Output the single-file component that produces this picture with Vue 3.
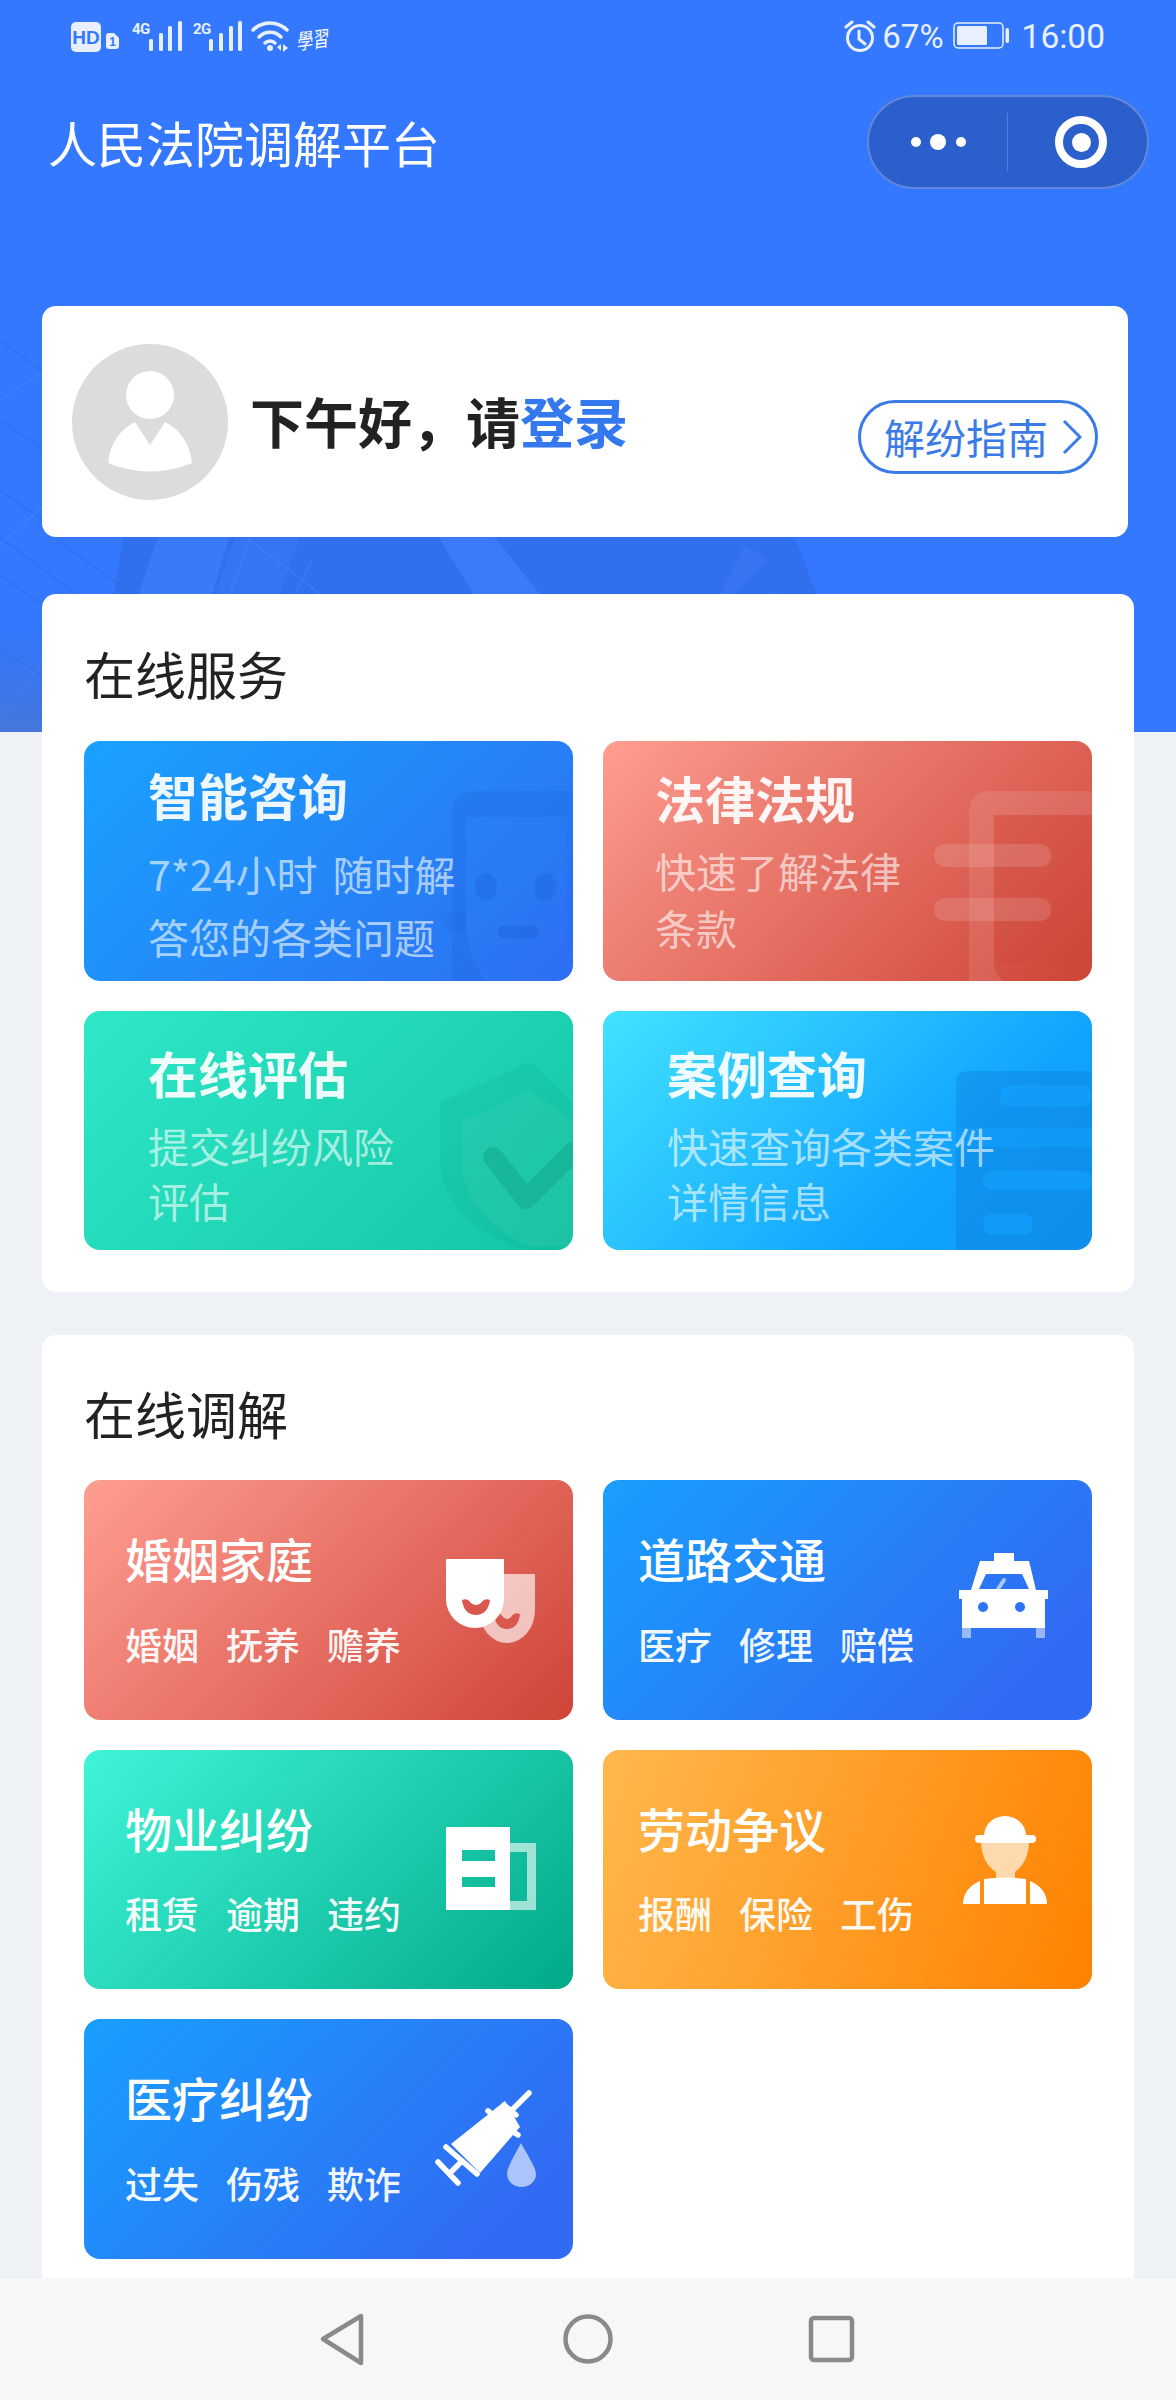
<script setup>
const services = [
  { key: 'ask', title: '智能咨询', lines: ['7*24小时 随时解', '答您的各类问题'] },
  { key: 'law', title: '法律法规', lines: ['快速了解法律', '条款'] },
  { key: 'risk', title: '在线评估', lines: ['提交纠纷风险', '评估'] },
  { key: 'case', title: '案例查询', lines: ['快速查询各类案件', '详情信息'] },
]

const disputes = [
  { key: 'family', color: 'red', title: '婚姻家庭', tags: ['婚姻', '抚养', '赡养'] },
  { key: 'traffic', color: 'blue', title: '道路交通', tags: ['医疗', '修理', '赔偿'] },
  { key: 'estate', color: 'green', title: '物业纠纷', tags: ['租赁', '逾期', '违约'] },
  { key: 'labor', color: 'orange', title: '劳动争议', tags: ['报酬', '保险', '工伤'] },
  { key: 'medical', color: 'blue', title: '医疗纠纷', tags: ['过失', '伤残', '欺诈'] },
]
</script>

<template>
  <div class="page">
    <!-- blue backdrop with the faint building -->
    <svg class="hero-bg" viewBox="0 0 1176 732" width="1176" height="732">
      <defs>
        <linearGradient id="fade" x1="0" y1="0" x2="0" y2="1">
          <stop offset="0" stop-color="#3a6fd8" stop-opacity="0" />
          <stop offset="1" stop-color="#4a78d4" stop-opacity="0.8" />
        </linearGradient>
      </defs>
      <rect width="1176" height="732" fill="#3478ff" />
      <polygon points="130,500 780,500 870,732 90,732" fill="#2c68dd" opacity="0.5" />
      <polygon points="170,500 240,500 205,620 130,620" fill="#3f80ff" opacity="0.6" />
      <polygon points="415,500 465,500 650,732 560,732" fill="#3b7bfb" />
      <polygon points="235,537 300,537 280,594 215,594" fill="#3b7bf8" opacity="0.45" />
      <polygon points="745,545 768,560 735,594 720,594" fill="#3a78f4" opacity="0.7" />
      <polygon points="775,590 790,610 770,640 760,620" fill="#3a78f4" opacity="0.7" />
      <g stroke="#2a62cf" stroke-width="1.500" opacity="0.32" fill="none">
        <line x1="0" y1="340" x2="60" y2="385" />
        <line x1="0" y1="420" x2="60" y2="460" />
        <line x1="0" y1="490" x2="60" y2="532" />
        <line x1="0" y1="537" x2="75" y2="594" />
        <line x1="0" y1="575" x2="60" y2="618" />
        <line x1="0" y1="650" x2="60" y2="685" />
        <line x1="0" y1="690" x2="60" y2="728" />
        <line x1="56" y1="540" x2="127" y2="590" />
      </g>
      <g stroke="#4c8cff" stroke-width="1.500" opacity="0.4" fill="none">
        <line x1="0" y1="545" x2="60" y2="490" />
        <line x1="0" y1="400" x2="60" y2="360" />
        <line x1="0" y1="720" x2="50" y2="650" />
        <line x1="230" y1="594" x2="250" y2="537" />
        <line x1="295" y1="594" x2="312" y2="560" />
        <line x1="250" y1="540" x2="320" y2="594" />
      </g>
      <rect x="0" y="620" width="60" height="112" fill="url(#fade)" />
    </svg>

    <!-- status bar -->
    <div class="status">
      <svg class="status-left" width="262" height="36" viewBox="71 20 262 36">
        <rect x="71" y="22" width="30" height="30" rx="5" fill="#e8f0ff" />
        <text x="86" y="44" class="hd" text-anchor="middle">HD</text>
        <path d="M106 36 a3 3 0 0 1 3-3 h5 l5 5 v8 a3 3 0 0 1-3 3 h-7 a3 3 0 0 1-3-3z" fill="#e8f0ff" />
        <text x="112.500" y="46" class="sim" text-anchor="middle">1</text>
        <text x="132" y="34" class="net">4G</text>
        <g fill="#e8f0ff">
          <rect x="149" y="39" width="4" height="12" rx="1.500" />
          <rect x="159" y="33" width="4" height="18" rx="1.500" />
          <rect x="168" y="26" width="4" height="25" rx="1.500" />
          <rect x="178" y="21" width="4" height="30" rx="1.500" />
        </g>
        <text x="193" y="34" class="net">2G</text>
        <g fill="#e8f0ff">
          <rect x="209" y="39" width="4" height="12" rx="1.500" />
          <rect x="219" y="33" width="4" height="18" rx="1.500" />
          <rect x="229" y="26" width="4" height="25" rx="1.500" />
          <rect x="238" y="21" width="4" height="30" rx="1.500" />
        </g>
        <g fill="none" stroke="#e8f0ff" stroke-width="3.500" stroke-linecap="round">
          <path d="M253 30 a24 24 0 0 1 34 0" />
          <path d="M259 37 a15 15 0 0 1 22 0" />
          <path d="M265 43 a7 7 0 0 1 10 0" />
        </g>
        <circle cx="270" cy="48" r="3" fill="#e8f0ff" />
        <path d="M277 47 l4-3 v7z M283 44 l5 4-5 4z" fill="#e8f0ff" />
        <text class="script" transform="translate(297 50) rotate(-8) scale(0.95 1.25)">學習</text>
      </svg>
      <div class="status-right">
        <svg width="32" height="34" viewBox="0 0 32 34" fill="none" stroke="#e8f0ff" stroke-width="3" stroke-linecap="round">
          <circle cx="16" cy="19" r="12.500" />
          <path d="M15 12v8l6 5" />
          <path d="M2 8 l6-5 M30 8 l-6-5" />
        </svg>
        <span class="pct">67%</span>
        <svg class="batt" width="57" height="28" viewBox="0 0 57 28" fill="none">
          <rect x="1" y="1" width="49" height="25" rx="4" stroke="#e8f0ff" stroke-width="1.500" />
          <rect x="4" y="4" width="30" height="19" rx="1.500" fill="#e8f0ff" />
          <rect x="52.500" y="6" width="3.500" height="15" rx="1.700" fill="#e8f0ff" />
        </svg>
        <span class="time">16:00</span>
      </div>
    </div>

    <!-- mini program nav -->
    <header class="nav">
      <span class="nav-title">人民法院调解平台</span>
      <div class="capsule">
        <div class="capsule-dots">
          <i class="dot small"></i><i class="dot"></i><i class="dot small"></i>
        </div>
        <div class="capsule-sep"></div>
        <div class="capsule-ring"><i></i></div>
      </div>
    </header>

    <!-- user card -->
    <section class="user">
      <svg class="avatar" width="156" height="156" viewBox="0 0 156 156">
        <circle cx="78" cy="78" r="78" fill="#dcdcdc" />
        <circle cx="78" cy="51" r="24" fill="#fff" />
        <path d="M63 78 L78 101 L93 78 C108 85 118 100 120 119 Q78 136 36 119 C38 100 48 85 63 78Z" fill="#fff" />
      </svg>
      <div class="greet">下午好，请<span>登录</span></div>
      <div class="guide">
        解纷指南
        <svg width="20" height="36" viewBox="0 0 20 36" fill="none" stroke="#3b7be8" stroke-width="3">
          <path d="M2 2 L18 18 L2 34" />
        </svg>
      </div>
    </section>

    <!-- online services -->
    <section class="panel services">
      <h2>在线服务</h2>
      <div class="grid">
        <div v-for="s in services" :key="s.key" class="tile svc" :class="s.key">
          <svg class="deco" width="489" height="240" viewBox="0 0 489 240">
            <g v-if="s.key === 'ask'">
              <path d="M368 240 V70 Q368 50 388 50 H489 V76 H382 V178 Q382 215 402 240Z" fill="#1c5fd8" opacity="0.22" />
              <path d="M355 170 h27 v20 h-20z" fill="#1c5fd8" opacity="0.14" />
              <path d="M483 76 h6 V205 h-6z" fill="#1c5fd8" opacity="0.16" />
              <ellipse cx="402" cy="146" rx="11" ry="14" fill="#1c5fd8" opacity="0.32" />
              <ellipse cx="461" cy="146" rx="11" ry="14" fill="#1c5fd8" opacity="0.32" />
              <rect x="414" y="185" width="41" height="12" rx="5" fill="#1c5fd8" opacity="0.38" />
            </g>
            <g v-else-if="s.key === 'law'">
              <path d="M391 74 H489 V222 H391Z" fill="#c8433a" opacity="0.18" />
              <path d="M366 240 V72 Q366 50 388 50 H489 V74 H391 V222 Q391 232 400 240Z" fill="#fff" opacity="0.1" />
              <rect x="331" y="103" width="117" height="23" rx="11" fill="#fff" opacity="0.13" />
              <rect x="331" y="157" width="117" height="23" rx="11" fill="#fff" opacity="0.13" />
            </g>
            <g v-else-if="s.key === 'risk'">
              <path d="M446 51 L356 92 V150 C356 195 400 228 446 240 H489 V92Z" fill="#0a9c84" opacity="0.14" />
              <path d="M446 79 L378 110 V150 C378 190 410 222 446 235 H489 V110Z" fill="#fff" opacity="0.05" />
              <path d="M409 146 L442 188 L489 141" fill="none" stroke="#0a9c84" stroke-opacity="0.38" stroke-width="20" stroke-linecap="round" stroke-linejoin="round" />
            </g>
            <g v-else>
              <path d="M353 72 Q353 60 365 60 H489 V240 H353Z" fill="#0a6fc8" opacity="0.28" />
              <rect x="397" y="74" width="92" height="22" rx="10" fill="#12a0ff" opacity="0.7" />
              <rect x="353" y="117" width="136" height="19" fill="#12a0ff" opacity="0.55" />
              <rect x="380" y="160" width="109" height="19" rx="9" fill="#12a0ff" opacity="0.7" />
              <rect x="380" y="203" width="50" height="21" rx="9" fill="#12a0ff" opacity="0.7" />
            </g>
          </svg>
          <div class="svc-title">{{ s.title }}</div>
          <div class="svc-lines">
            <div v-for="l in s.lines" :key="l">{{ l }}</div>
          </div>
        </div>
      </div>
    </section>

    <!-- online mediation -->
    <section class="panel mediation">
      <h2>在线调解</h2>
      <div class="grid">
        <div v-for="d in disputes" :key="d.key" class="tile dispute" :class="d.color">
          <div class="dispute-text">
            <div class="dispute-title">{{ d.title }}</div>
            <div class="dispute-tags">
              <span v-for="t in d.tags" :key="t">{{ t }}</span>
            </div>
          </div>
          <svg class="dispute-icon" width="100" height="100" viewBox="0 0 100 100">
            <g v-if="d.key === 'family'">
              <path d="M43 24 H99 V60 A28 33 0 0 1 43 60Z" fill="#fff" opacity="0.65" />
              <path d="M58 64 C62 62 65 64 67 67 Q71 71 75 67 C77 64 80 62 84 64 C83 74 78 79 71 79 C64 79 59 74 58 64Z" fill="#d9574c" />
              <path d="M10 9 H68 V49 A29 29 0 0 1 10 49Z" fill="#fff" />
              <path d="M26 50 C30 48 33 50 35 53 Q40 57 45 53 C47 50 50 48 54 50 C53 60 47 65 40 65 C33 65 27 60 26 50Z" fill="#d9574c" />
            </g>
            <g v-else-if="d.key === 'traffic'">
              <rect x="46" y="3" width="20" height="8" fill="#fff" />
              <rect x="14" y="76" width="9" height="12" fill="#fff" opacity="0.5" />
              <rect x="88" y="76" width="9" height="12" fill="#fff" opacity="0.5" />
              <path fill-rule="evenodd" fill="#fff" d="M32 11 H81 L88 40 H100 V49 H97 V78 H14 V49 H11 V40 H23Z M38 24 L31 39 H81 L74 24Z M35 52 a5 5 0 1 0 0.010 0Z M72 52 a5 5 0 1 0 0.010 0Z" />
              <path d="M50 39 L56 30" stroke="#fff" stroke-opacity="0.6" stroke-width="4" stroke-linecap="round" />
            </g>
            <g v-else-if="d.key === 'estate'">
              <path fill-rule="evenodd" d="M74 24 H100 V91 H74 V82 H91 V33 H74Z" fill="#fff" opacity="0.6" />
              <path fill-rule="evenodd" d="M10 8 H74 V91 H10Z M26 31 V42 H59 V31Z M26 58 V68 H59 V58Z" fill="#fff" />
            </g>
            <g v-else-if="d.key === 'labor'">
              <path d="M33 22 H81 C81 38 74 48 67 53 V62 H48 V53 C40 48 33 38 33 22Z" fill="#ffd9ae" />
              <path d="M36 17 A21 20 0 0 1 78 17Z" fill="#fff" />
              <rect x="27" y="16" width="61" height="8" rx="4" fill="#fff" />
              <path d="M36 85 V60 Q57 57 78 60 V85Z" fill="#fff" />
              <path d="M15 85 C15 74 22 66 32 62 V85Z" fill="#fff" />
              <path d="M99 85 C99 74 92 66 82 62 V85Z" fill="#fff" />
            </g>
            <g v-else>
              <path d="M15 55 L69 12 L84 38 L44 84Z" fill="#fff" />
              <g stroke="#fff" stroke-width="5.500" stroke-linecap="round">
                <line x1="93" y1="4" x2="75" y2="22" />
                <line x1="10" y1="58" x2="41" y2="85" />
                <line x1="2" y1="73" x2="22" y2="94" />
                <line x1="14" y1="84" x2="26" y2="72" />
                <line x1="52" y1="22" x2="60" y2="28" />
                <line x1="68" y1="16" x2="80" y2="26" />
                <line x1="76" y1="42" x2="82" y2="46" />
              </g>
              <path d="M85 54 C90 64 100 78 100 85 A14.500 13 0 0 1 71 85 C71 78 80 64 85 54Z" fill="#fff" opacity="0.6" />
            </g>
          </svg>
        </div>
      </div>
    </section>

    <!-- android nav bar -->
    <footer class="sysbar">
      <svg width="1176" height="122" viewBox="0 0 1176 122" fill="none" stroke="#8a8a8a" stroke-width="4.500" stroke-linejoin="round">
        <path d="M323 61 L361 38 V85Z" />
        <circle cx="588" cy="61" r="22.500" />
        <rect x="811" y="40" width="41" height="42" rx="3" />
      </svg>
    </footer>
  </div>
</template>

<style>
body {
  margin: 0;
  background: #eef1f6;
}
</style>

<style scoped>
.page {
  position: relative;
  width: 1176px;
  height: 2400px;
  overflow: hidden;
  background: #eef1f6;
  font-family: "Noto Sans CJK SC", "Noto Sans", sans-serif;
  color: #222;
}

.hero-bg {
  position: absolute;
  top: 0;
  left: 0;
  display: block;
}

.status {
  position: relative;
  display: flex;
  justify-content: space-between;
  height: 72px;
  padding-left: 71px;
  padding-right: 71px;
}

.status-left {
  margin-top: 20px;
  overflow: visible;
}

.hd {
  font: 700 19px "Liberation Sans", sans-serif;
  fill: #3478ff;
}

.sim {
  font: 700 12px "Liberation Sans", sans-serif;
  fill: #3478ff;
}

.net {
  font: 700 15px "Roboto", sans-serif;
  fill: #e8f0ff;
  letter-spacing: -0.5px;
}

.script {
  font: italic 17px "Noto Sans CJK SC", sans-serif;
  fill: #fff;
}

.status-right {
  display: flex;
  align-items: center;
  height: 72px;
  font-family: Roboto, sans-serif;
  font-size: 33px;
  color: #e8f0ff;
}

.pct {
  margin-left: 6px;
  margin-right: 9px;
}

.batt {
  margin-right: 12px;
}

.time {
  font-size: 33.500px;
}

.nav {
  position: relative;
  display: flex;
  align-items: center;
  justify-content: space-between;
  height: 140px;
  padding: 0 27px 0 48px;
}

.nav-title {
  font-size: 49px;
  line-height: 60px;
  color: #fff;
}

.capsule {
  display: flex;
  align-items: center;
  box-sizing: border-box;
  width: 282px;
  height: 94px;
  border: 2px solid rgba(255, 255, 255, 0.25);
  border-radius: 47px;
  background: #2b5fcc;
}

.capsule-dots {
  display: flex;
  align-items: center;
  justify-content: center;
  gap: 9.500px;
  width: 138px;
}

.dot {
  width: 16px;
  height: 16px;
  border-radius: 50%;
  background: #fff;
}

.dot.small {
  width: 10px;
  height: 10px;
}

.capsule-sep {
  width: 1px;
  height: 58px;
  background: rgba(255, 255, 255, 0.2);
}

.capsule-ring {
  display: flex;
  align-items: center;
  justify-content: center;
  box-sizing: border-box;
  width: 52px;
  height: 52px;
  margin-left: 47px;
  border: 8px solid #fff;
  border-radius: 50%;
}

.capsule-ring i {
  width: 19px;
  height: 19px;
  border-radius: 50%;
  background: #fff;
}

.user {
  position: relative;
  display: flex;
  align-items: center;
  box-sizing: border-box;
  width: 1086px;
  height: 231px;
  margin: 94px 0 0 42px;
  padding: 0 30px 0 30px;
  background: #fff;
  border-radius: 14px;
}

.avatar {
  flex-shrink: 0;
}

.greet {
  margin: -1px 0 0 22px;
  font-size: 54px;
  line-height: 70px;
  font-weight: 700;
  color: #222;
}

.greet span {
  color: #3478f0;
}

.guide {
  display: flex;
  align-items: center;
  justify-content: space-between;
  box-sizing: border-box;
  width: 240px;
  height: 74px;
  margin: 30px 0 0 auto;
  padding: 0 13px 0 23px;
  border: 3px solid #3b7be8;
  border-radius: 37px;
  font-size: 41px;
  line-height: 1;
  color: #3b7be8;
}

.panel {
  position: relative;
  box-sizing: border-box;
  width: 1092px;
  margin-left: 42px;
  padding: 0 42px;
  background: #fff;
  border-radius: 14px;
}

.panel h2 {
  margin: 0;
  font-size: 51px;
  line-height: 60px;
  font-weight: 400;
  color: #222;
}

.grid {
  display: grid;
  grid-template-columns: 489px 489px;
  grid-auto-rows: 239.500px;
  gap: 30px;
}

.services {
  height: 698px;
  margin-top: 57px;
  padding-top: 49px;
}

.services h2 {
  margin-bottom: 38px;
}

.mediation {
  height: 1100px;
  margin-top: 43px;
  padding-top: 48px;
}

.mediation h2 {
  margin-bottom: 37px;
}

.tile {
  position: relative;
  display: flex;
  overflow: hidden;
  box-sizing: border-box;
  border-radius: 16px;
  color: #fff;
}

.svc {
  flex-direction: column;
  padding: 31px 0 0 64px;
}

.deco {
  position: absolute;
  top: 0;
  left: 0;
}

.svc-title {
  position: relative;
  font-size: 50px;
  line-height: 60px;
  font-weight: 700;
  color: rgba(255, 255, 255, 0.92);
}

.svc-lines {
  position: relative;
  margin-top: 16px;
  font-size: 41px;
  line-height: 55px;
  color: rgba(255, 255, 255, 0.62);
  white-space: pre;
}

.ask {
  padding-top: 23px;
  background: linear-gradient(135deg, #19a2ff 0%, #2e6ef2 100%);
}

.ask .svc-lines {
  margin-top: 18px;
  line-height: 63px;
  word-spacing: 6px;
}

.law {
  padding: 26px 0 0 52px;
  background: linear-gradient(135deg, #ff9e92 0%, #f08578 25%, #ce4438 100%);
}

.law .svc-lines {
  margin-top: 15px;
  line-height: 57px;
}

.risk {
  background: linear-gradient(135deg, #2ee8c8 0%, #12c5a4 100%);
}

.case {
  background: linear-gradient(135deg, #42e2ff 0%, #10a2ff 70%, #0f9cf8 100%);
}

.dispute {
  align-items: center;
  justify-content: space-between;
  padding: 0 37px 0 41px;
}

.dispute:nth-child(even) {
  padding: 0 44px 0 35px;
}

.dispute-text {
  align-self: flex-start;
  padding-top: 48px;
}

.dispute-title {
  font-size: 47px;
  line-height: 60px;
  font-weight: 500;
}

.dispute-tags {
  display: flex;
  gap: 27px;
  margin-top: 30.500px;
  font-size: 37px;
  line-height: 50px;
  font-weight: 500;
  color: rgba(255, 255, 255, 0.95);
}

.dispute-icon {
  flex-shrink: 0;
  overflow: visible;
}

.red {
  background: linear-gradient(135deg, #ff9d91 0%, #cf4439 100%);
}

.blue {
  background: linear-gradient(135deg, #189fff 0%, #316bf3 85%);
}

.green {
  background: linear-gradient(135deg, #3ff5d8 0%, #01a988 100%);
}

.orange {
  background: linear-gradient(110deg, #ffb84d 0%, #ff8100 100%);
}

.sysbar {
  position: absolute;
  left: 0;
  bottom: 0;
  width: 1176px;
  height: 122px;
  background: #f7f7f7;
}

.sysbar svg {
  display: block;
}
</style>
